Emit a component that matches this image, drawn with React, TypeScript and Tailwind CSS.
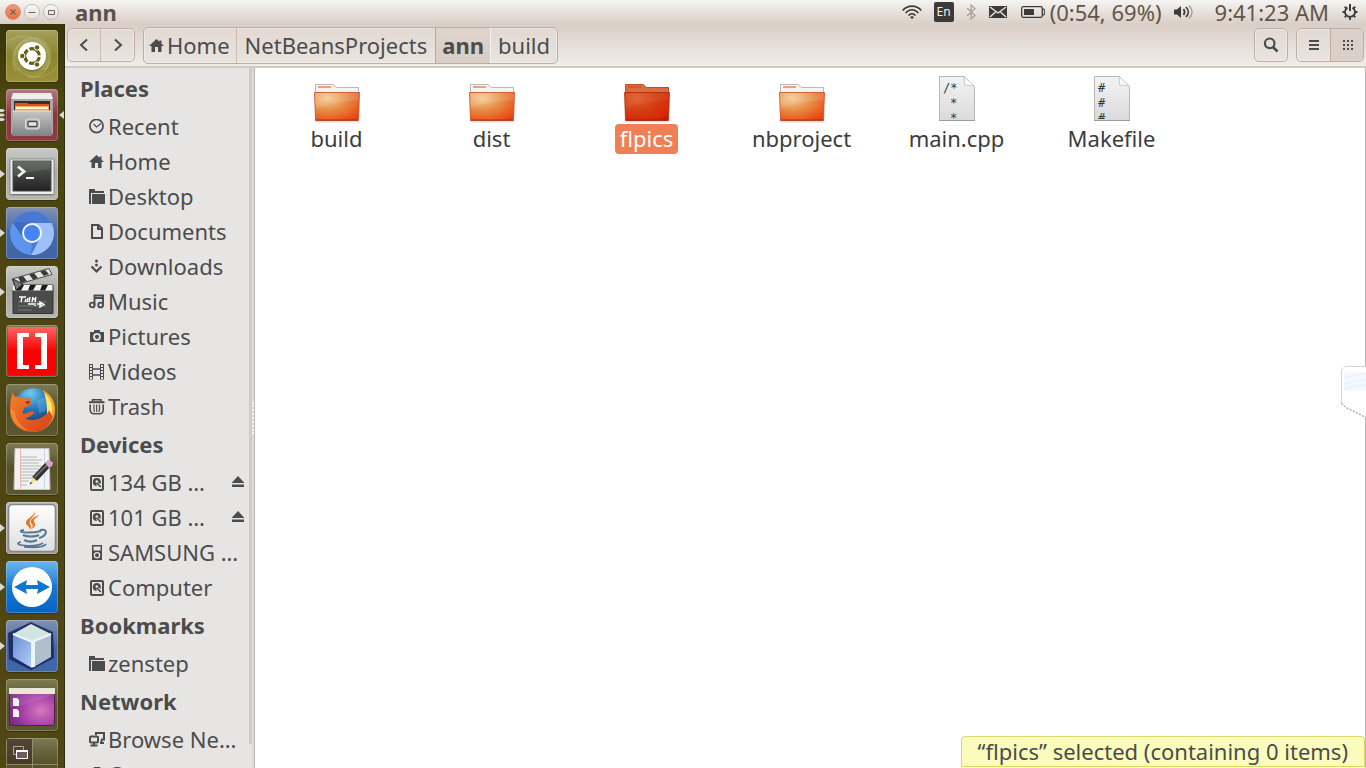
import React, { ReactNode } from "react";

const FONT = "font-['Noto_Sans','Open_Sans',sans-serif]";

/* ---------- Sidebar symbols (16 x 16) ---------- */

type SymbolName =
  | "recent" | "home" | "folder" | "document" | "download" | "music" | "camera"
  | "video" | "trash" | "disk" | "player" | "network" | "server";

const SYMBOLS: Record<SymbolName, ReactNode> = {
  recent: (
    <g fill="none" stroke="currentColor">
      <circle cx="7.500" cy="7" r="6.600" strokeWidth="1.700" />
      <path d="M4.500 5l3 3L12 4.500" strokeWidth="1.200" />
    </g>
  ),
  home: <path fill="currentColor" d="M7.500 1L0 8h2.500v6h3.500V9h3v5h3.500V8H15l-2.500-2.300V2.500h-2v1.200z" />,
  folder: (
    <g fill="currentColor">
      <path d="M0 0h6v2h9v2H2v11H0z" />
      <path d="M3 5h13v10H3z" />
    </g>
  ),
  document: <path fill="none" stroke="currentColor" strokeWidth="2" d="M3 1h6.500L13 4.500V14H3zM9 1v4h4" />,
  download: (
    <g fill="currentColor">
      <circle cx="7.500" cy="2" r="1.500" />
      <circle cx="7.500" cy="6" r="1.500" />
      <path d="M2.500 7.500l5 5 5-5" fill="none" stroke="currentColor" strokeWidth="2.200" />
    </g>
  ),
  music: (
    <g fill="none" stroke="currentColor" strokeWidth="1.900">
      <path d="M5.500 11V1.500H14V11M5.500 4H14" />
      <circle cx="3.200" cy="11" r="2.400" />
      <circle cx="11.600" cy="11" r="2.400" />
    </g>
  ),
  camera: (
    <g>
      <path fill="currentColor" d="M5 1h6v2h4v10H1V3h4z" />
      <circle cx="8" cy="7.800" r="3" fill="none" stroke="#e6e5e4" strokeWidth="1.800" />
    </g>
  ),
  video: (
    <g fill="none" stroke="currentColor">
      <path d="M.5 0v15.500M14.500 0v15.500M3.500 0v15.500M11.500 0v15.500" strokeWidth="1" />
      <path d="M2 0v15.500M13 0v15.500" strokeWidth="2" strokeDasharray="1 2" />
      <path d="M4 5h8M4 11h8" strokeWidth="1.500" />
    </g>
  ),
  trash: (
    <g fill="none" stroke="currentColor" strokeWidth="1.600">
      <path d="M0 3.200h15.500" strokeWidth="2" />
      <path d="M3.500 2.500V.8h8.500v1.700" />
      <path d="M1.200 5.500v5c0 2.500 1.500 4.300 4 4.300h5c2.500 0 4-1.800 4-4.300v-5" />
      <path d="M5.200 5.500c-.6 2.500-.6 5 .3 7.500M7.700 5.500v7.500M10.300 5.500c.6 2.500.6 5-.3 7.500" strokeWidth="1.200" />
    </g>
  ),
  disk: (
    <g>
      <rect x="2" y="1" width="12" height="14" rx="1" fill="none" stroke="currentColor" strokeWidth="2" />
      <circle cx="7.800" cy="7" r="4" fill="currentColor" />
      <circle cx="7.800" cy="6.600" r="1.300" fill="#e6e5e4" />
      <path d="M8.500 8.500l3 4" stroke="#e6e5e4" strokeWidth="3.600" />
      <path d="M8 8l3.700 4" stroke="currentColor" strokeWidth="1.700" />
    </g>
  ),
  player: (
    <g>
      <path fill="currentColor" d="M3 0h10v15H3zM4.500 1.500v4h7v-4z" fillRule="evenodd" />
      <circle cx="8" cy="10.200" r="2.600" fill="none" stroke="#e6e5e4" strokeWidth="1.300" />
    </g>
  ),
  network: (
    <g fill="none" stroke="currentColor" strokeWidth="2">
      <path d="M7 3V1h8v6.500h-3M12.500 8v3M11 11h4" />
      <rect x="1" y="4.500" width="8" height="6" rx="1" />
      <path d="M5 10.500V13M1.500 13.500h7" />
    </g>
  ),
  server: <path fill="currentColor" d="M5 0h6l2 3v11H3V3zM5 6v2h6V6z" fillRule="evenodd" />,
};

function Symbol({ name }: { name: SymbolName }) {
  return (
    <svg viewBox="0 0 16 16" className="size-4 shrink-0" aria-hidden="true">
      {SYMBOLS[name]}
    </svg>
  );
}

/* ---------- Launcher drawings (52 x 52) ---------- */

const ubuntuArt = (
  <g>
    <g fill="none" stroke="#fff" strokeOpacity=".14" strokeWidth="1.200">
      <path d="M9 41C1 20 16 6 31 8c14 3 18 22 8 32" fill="#fff" fillOpacity=".1" />
      <path d="M0 12c18-12 40-4 43 14 2 14-10 24-22 20" fill="#fff" fillOpacity=".06" />
      <path d="M51 36C43 49 24 51 13 40 4 29 9 13 22 10" />
    </g>
    <circle cx="26" cy="27.500" r="14" fill="#403c08" fillOpacity=".4" />
    <circle cx="26" cy="26" r="14" fill="#fff" />
    <circle cx="26" cy="26" r="7.300" fill="none" stroke="#655f12" strokeWidth="3.200" strokeDasharray="13.300 2" strokeDashoffset="-1" />
    <g fill="#655f12" stroke="#fff" strokeWidth="1">
      <circle cx="16.300" cy="26" r="2.700" />
      <circle cx="31" cy="17.500" r="2.700" />
      <circle cx="31" cy="34.500" r="2.700" />
    </g>
  </g>
);

const filesArt = (
  <g>
    <path d="M7 5h38l2 7v33H5V12z" fill="#a7a9a9" />
    <path d="M7 4h38l2 6H5z" fill="#eeeeec" />
    <path d="M8 12h36v13H8z" fill="#303230" />
    <path d="M9 14h12l2 1h20v9H9z" fill="#d9581b" />
    <path d="M9 17h34v8H9z" fill="#f1a55c" />
    <path d="M10 18h32v2H10z" fill="#fff2d8" />
    <path d="M7 22h38l1 25H6z" fill="url(#steel)" />
    <path d="M7 22h38" stroke="#e5e5e5" />
    <rect x="19.500" y="30" width="14" height="10" rx="2" fill="#bbb" stroke="#dedede" />
    <rect x="22" y="32.500" width="9" height="5" rx="1" fill="#e8e8e8" stroke="#494949" strokeWidth="1.300" />
  </g>
);

const terminalArt = (
  <g>
    <rect x="4" y="11" width="44" height="36" rx="1" fill="#eee" stroke="#868886" />
    <path d="M5 46.500h42" stroke="#777" />
    <rect x="7" y="13" width="38" height="30" fill="url(#ink)" stroke="#4a4b4a" />
    <path d="M8 13h36v8Q25 23 8 29z" fill="#fff" fillOpacity=".09" />
    <path d="M12 18.500l6 5-6 5" fill="none" stroke="#f3f3f3" strokeWidth="2.800" />
    <path d="M20 30h8" stroke="#f3f3f3" strokeWidth="2" />
  </g>
);

const chromiumArt = (
  <g>
    <circle cx="26" cy="26" r="22" fill="#5d94ee" />
    <path d="M26 26L7 15A22 22 0 0 1 45.500 16H26z" fill="#4a78cf" />
    <path d="M26 16h19.500A22 22 0 0 1 25 48l9-17z" fill="#9dc0fa" />
    <path d="M6.500 15L17 31l9-15z" fill="#3d6bc4" />
    <path d="M25 48l9-17-8 5z" fill="#477bd5" />
    <circle cx="26" cy="26" r="10" fill="#f5f9ff" />
    <circle cx="26" cy="26" r="8" fill="#4584f3" />
  </g>
);

const clapperArt = (
  <g>
    <path d="M6 13L43 2.500l3 6L9 19z" fill="#e5e5e3" stroke="#4d4e4d" />
    <path d="M12 11.500l5-1.500 4 5-6 2zM23 8.500l5-1.500 4 5-5 1.500zM34 5.500l5-1.500 4 4-5 2z" fill="#3a3b3a" />
    <path d="M7 19h40v28.500H7z" fill="#4b4d4c" stroke="#333" />
    <path d="M6.500 19h40v5.500h-40z" fill="#f4f4f4" />
    <path d="M12 19h6l-3 5.500h-5zM24 19h6l-3 5.500h-5zM36 19h6l-3 5.500h-5z" fill="#1c1c1c" />
    <path d="M7 13l10 5-7 6z" fill="#777" stroke="#292929" />
    <path d="M12 36h28M12 40h28M12 44h14" stroke="#777b78" />
    <path d="M13 31h7m-4 0l-1 5m5-3l-1 3m3-4l-1 4m3-5l-1 5m4-5l-1 5m1-3h2m1-2l-1 5M22 38h6m1-1v3m2-2h5m-2-2v5l4-2.500z" fill="none" stroke="#fff" strokeWidth="1.400" />
  </g>
);

const bracketsArt = (
  <g>
    <path d="M2 2h48v48H2z" fill="#fc0000" />
    <path d="M2 2h48v24H2z" fill="url(#gloss)" />
    <path d="M23 8H11v36h12v-4h-6V12h6zM29 8h12v36H29v-4h6V12h-6z" fill="#fff" />
  </g>
);

const firefoxArt = (
  <g>
    <circle cx="27" cy="24" r="20" fill="url(#globe)" />
    <path d="M14 12c4-5 9-7 14-7l-3 5-8 4zM31 17l7-4 5 5-3 9-7 2z" fill="#7fd4f2" fillOpacity=".3" />
    <path d="M37 6c11 6 14 17 11 27-3 8-10 14-20 15 9-4 14-10 14-19 0-9-1-15-5-23z" fill="#f3a72a" />
    <path d="M38 9c8 6 10 15 7 25l-1-6c-1 3-2 6-4 8 2-9 1-19-2-27z" fill="#fbe667" />
    <path d="M7 8c0 2 1 4 3 5 3-1 7 0 9 2l6-1c-1 2-1 4 0 6-1 2-5 3-7 4 0 2-1 3-2 4 1 2 3 2 5 1 3-2 6-2 8 0-3 1-5 5-10 5 6 4 14 2 20-3 2-1 3-2 4-5l4 7C43 43 36 48 26 48 13 48 4 38 4 26c0-7 1-13 3-18z" fill="url(#fox)" />
    <path d="M5 25c-1 10 6 20 18 22-9-5-13-11-14-19z" fill="#f3a03b" fillOpacity=".6" />
    <path d="M19 18l5-1-2 3z" fill="#7e260d" />
  </g>
);

const editorArt = (
  <g>
    <path d="M9 5.500h34l1 41H8z" fill="#f2f2f2" stroke="#c5c5c5" />
    <path d="M14.500 6v40" stroke="#efb5b3" />
    <path d="M38.500 6v40" stroke="#d0d3ea" />
    <path d="M15 14h16M15 17h21M15 20h18M15 23h21M15 26h18M15 29h18M15 32h12M15 35h12M15 38h8M15 42h6" stroke="#b4b4b4" />
    <path d="M26 34l14-15 5 4-14 15z" fill="#343434" />
    <path d="M28 35l14-14" stroke="#777" strokeWidth="1.500" />
    <path d="M39 20l3-3 3 1 2 2-1 3-3 2z" fill="#dba0cf" />
    <path d="M26 34l5 4-7 3z" fill="#f2e58c" />
    <path d="M24.500 39l2 1-3 1.500z" fill="#333" />
  </g>
);

const javaArt = (
  <g>
    <rect x="2.500" y="2.500" width="47" height="47" rx="4" fill="url(#paper)" stroke="#7f8792" strokeWidth="1.600" />
    <path d="M28 6c5 7-9 10-8 15 0 3 4 3 4 7 3-4-1-5 0-9 1-4 8-6 4-13zM33 13c-8 3-10 6-7 9 1 2 1 3-1 5 7-3 3-6 3-8 0-3 3-3 5-6z" fill="#e9782a" />
    <g fill="none" stroke="#567792" strokeWidth="2">
      <path d="M18 28c-10 2 6 4 17 1M17 33c4 2 12 2 16 0M18 38c4 2 9 2 13 0M34 28c9-2 7 6-1 8" />
      <path d="M15 40c-12 3 14 6 22 1M18 45c12 1 20 0 22-3" strokeWidth="1.700" />
    </g>
  </g>
);

const teamArt = (
  <g>
    <circle cx="26" cy="26" r="20" fill="#fff" />
    <path d="M8 26l13-7-1 5h12l-1-5 13 7-13 7 1-5H20l1 5z" fill="#0d77d4" />
  </g>
);

const cubeArt = (
  <g>
    <path d="M25 2l22 10 1 26-23 12L3 39 2 13z" fill="#17205a" fillOpacity=".82" />
    <path d="M25 4l20 10-19 8L7 14z" fill="#d3e5e0" />
    <path d="M7 14l19 8v26L7 37z" fill="url(#ice)" />
    <path d="M26 22l19-8v23L26 48z" fill="#afbfcb" />
    <path d="M27 22v25" stroke="#e9f6fb" strokeWidth="4" />
    <path d="M7 14l19 8 19-8" fill="none" stroke="#edf6fa" strokeWidth="2" />
  </g>
);

const desktopArt = (
  <g>
    <rect x="3.500" y="9.500" width="45" height="37" rx="2" fill="url(#violet)" stroke="#51204f" />
    <path d="M4 28Q30 24 48 15H4z" fill="#fff" fillOpacity=".1" />
    <path d="M3 9h46v6H3z" fill="#e9e7d6" />
    <path d="M7 19h4l2 2v6H7zM7 30h4l2 2v6H7z" fill="#f6f1f3" />
  </g>
);

const workspaceArt = (
  <g>
    <rect x="1" y="1" width="25" height="26" fill="#45332b" fillOpacity=".75" />
    <path d="M26.500 0v52M0 26.500h52" stroke="#9b987c" strokeOpacity=".8" />
    <path d="M7.500 8.500h10v8h-10z" fill="none" stroke="#aaa69e" />
    <path d="M10.500 12.500h11v8h-11z" fill="#6d5c60" stroke="#fff" />
    <path d="M10 13h12" stroke="#fff" strokeWidth="2" />
  </g>
);

interface LauncherItem { name: string; tile: string; art: ReactNode; running?: boolean; focused?: boolean }

const GLASS = "bg-linear-to-b from-[#7d7a54] via-[#55522a] to-[#5b582f]";

const LAUNCHER: LauncherItem[] = [
  { name: "Dash", tile: "bg-linear-to-b from-[#a5a05c] via-[#8b8428] to-[#999138]", art: ubuntuArt },
  { name: "Files", tile: "bg-linear-to-b from-[#b07b80] via-[#8d343f] to-[#8e3c45]", art: filesArt, focused: true },
  { name: "Terminal", tile: "bg-linear-to-b from-[#c9c9c5] via-[#a9aaa5] to-[#b5b6b0]", art: terminalArt, running: true },
  { name: "Chromium", tile: "bg-linear-to-b from-[#8292b0] via-[#466aa8] to-[#4065a8]", art: chromiumArt, running: true },
  { name: "Video editor", tile: "bg-linear-to-b from-[#c9c9c5] via-[#a8a9a4] to-[#b5b6b0]", art: clapperArt, running: true },
  { name: "Brackets", tile: GLASS, art: bracketsArt },
  { name: "Firefox", tile: GLASS, art: firefoxArt },
  { name: "Text editor", tile: GLASS, art: editorArt },
  { name: "Java", tile: "bg-linear-to-b from-[#bebcb4] to-[#a69d87]", art: javaArt, running: true },
  { name: "TeamViewer", tile: "bg-linear-to-b from-[#6eb5f0] via-[#1479d4] to-[#0763c2]", art: teamArt, running: true },
  { name: "NetBeans", tile: "bg-linear-to-b from-[#8292b0] via-[#4468a6] to-[#4065a8]", art: cubeArt, running: true },
  { name: "Show desktop", tile: GLASS, art: desktopArt },
  { name: "Workspaces", tile: GLASS, art: workspaceArt },
];

function Launcher() {
  return (
    <nav
      aria-label="Launcher"
      className="flex w-[65px] shrink-0 flex-col gap-[7px] overflow-hidden border-r border-[#292b12] bg-linear-to-b from-[#363508] via-[#4b4510] via-10% to-[#514714] pt-[6px]"
    >
      {LAUNCHER.map((item) => (
        <div key={item.name} className="flex shrink-0 items-center">
          <svg viewBox="0 0 6 16" className="h-4 w-[6px] shrink-0" fill="#d9d9d4" aria-hidden="true">
            {item.running && <path d="M0 4l5 4-5 4z" />}
            {item.focused && <path d="M0 2h3l2 1.500L3 5H0zM0 6.500h3L5 8 3 9.500H0zM0 11h3l2 1.500L3 14H0z" />}
          </svg>
          <button
            type="button"
            aria-label={item.name}
            className={`size-[52px] shrink-0 overflow-hidden rounded-[4px] shadow-[inset_0_0_0_1px_rgba(255,255,255,0.22),0_1px_1px_rgba(0,0,0,0.3)] ${item.tile}`}
          >
            <svg viewBox="0 0 52 52" className="size-full" aria-hidden="true">{item.art}</svg>
          </button>
          {item.focused && (
            <svg viewBox="0 0 6 16" className="h-4 w-[6px] shrink-0" aria-hidden="true">
              <path d="M6 4L1 8l5 4z" fill="#d9d9d4" />
            </svg>
          )}
        </div>
      ))}
    </nav>
  );
}

/* ---------- Top panel ---------- */

function WindowButton({ label, tone, children }: { label: string; tone: string; children: ReactNode }) {
  return (
    <button type="button" aria-label={label} className={`grid size-4 place-items-center rounded-full border ${tone}`}>
      <svg viewBox="0 0 14 14" className="size-[14px]" fill="none" stroke="#6b645e" aria-hidden="true">{children}</svg>
    </button>
  );
}

function Panel() {
  return (
    <header className="flex h-6 shrink-0 items-center bg-linear-to-b from-[#f6f4f2] to-[#d9cfc6] pr-2 pl-[5px] text-[#5b524c]">
      <div className="flex gap-[3px]">
        <WindowButton label="Close" tone="border-[#d09078] bg-linear-to-b from-[#f39b76] to-[#ed6c42]">
          <path d="M4.500 4.500l5 5m0-5l-5 5" strokeWidth="1.300" />
        </WindowButton>
        <WindowButton label="Minimize" tone="border-[#c6bdb5] bg-linear-to-b from-[#f9f8f7] to-[#e4dfdb]">
          <path d="M3.500 7.500h7" />
        </WindowButton>
        <WindowButton label="Maximize" tone="border-[#c6bdb5] bg-linear-to-b from-[#f9f8f7] to-[#e4dfdb]">
          <path d="M4.500 5.500h6v4h-6z" />
        </WindowButton>
      </div>
      <h1 className="ml-4 text-[22px] leading-6 font-bold">ann</h1>

      <div className="ml-auto flex items-center text-[22px] leading-6 text-[#5f554c]">
        <svg viewBox="0 0 20 14" className="mr-3 h-[14px] w-5" fill="none" stroke="#3c3b37" strokeWidth="1.600" aria-hidden="true">
          <path d="M.6 5.500C6-.3 14-.3 19.400 5.500M3.600 8C7.500 3.600 12.500 3.600 16.400 8M6.500 10.500c2-2.400 5-2.400 7 0" />
          <path d="M8 12.200c1-1.200 3-1.200 4 0l-2 1.800z" fill="#3c3b37" stroke="none" />
        </svg>
        <span className="mr-3 grid h-5 w-5 place-items-center rounded-[2px] bg-[#3c3b3a] text-[12px] leading-5 text-[#f2efec]">En</span>
        <svg viewBox="0 0 10 16" className="mr-[13px] h-4 w-[10px]" fill="none" stroke="#aaa39c" strokeWidth="1.300" aria-hidden="true">
          <path d="M1 4l8 7.500L5 15V1l4 3.500L1 12" />
        </svg>
        <svg viewBox="0 0 18 12" className="mr-[14px] h-3 w-[18px]" aria-hidden="true">
          <path d="M0 0h18v12H0z" fill="#3c3b3a" />
          <path d="M1 1l8 6 8-6M1 11l5.500-5M17 11l-5.500-5" fill="none" stroke="#f0edea" strokeWidth="1.200" />
        </svg>
        <svg viewBox="0 0 24 12" className="mr-[5px] h-3 w-6" aria-hidden="true">
          <rect x=".7" y=".7" width="20.600" height="10.600" rx="1.500" fill="none" stroke="#3c3b3a" strokeWidth="1.300" />
          <path d="M22 3h1.300v6H22" fill="none" stroke="#3c3b3a" />
          <path d="M3 3h10v6H3z" fill="#3c3b3a" />
        </svg>
        <span>(0:54, 69%)</span>
        <svg viewBox="0 0 20 16" className="mr-[21px] ml-3 h-4 w-5" fill="none" strokeWidth="1.700" aria-hidden="true">
          <path d="M0 5.500h3L7 2v12l-4-3.500H0z" fill="#3c3b3a" />
          <path d="M9.500 5c1.500 2 1.500 4 0 6M12 3c3 3 3 7 0 10" stroke="#3c3b3a" />
          <path d="M15 1.500c4 4 4 9 0 13" stroke="#aaa39c" />
        </svg>
        <time>9:41:23 AM</time>
        <svg viewBox="0 0 16 16" className="ml-[13px] size-4" fill="none" stroke="#3c3b3a" aria-hidden="true">
          <path d="M5.500 3.600a5 5 0 1 0 5 0" strokeWidth="1.800" />
          <path d="M8 0v7" strokeWidth="2" />
          <path d="M.5 8H3M13 8h2.500M2.700 2.700l1.600 1.600M13.300 2.700l-1.600 1.600M2.700 13.300l1.600-1.600M13.300 13.300l-1.600-1.600M8 13v3" strokeWidth="1.800" />
        </svg>
      </div>
    </header>
  );
}

/* ---------- Toolbar ---------- */

const BEVEL = "rounded-[5px] border border-[#bcaea2] bg-linear-to-b from-[#e2d9d2] to-[#e9e4df] shadow-[inset_0_0_0_1px_rgba(255,255,255,0.35)]";

function Toolbar() {
  return (
    <div className="flex h-[44px] shrink-0 items-start border-b-2 border-[#cfcac4] bg-linear-to-b from-[#d9cec5] to-[#f1ede9] pt-[3px] pr-[2px] pl-[2px] text-[#4c4c4c]">
      <div className={`mt-[1px] flex h-[34px] ${BEVEL}`}>
        <button type="button" aria-label="Back" className="grid w-[33px] place-items-center border-r border-[#c9bdb3]">
          <svg viewBox="0 0 16 16" className="size-4" fill="none" stroke="currentColor" strokeWidth="2" aria-hidden="true"><path d="M11 2.500L5 8l6 5.500" /></svg>
        </button>
        <button type="button" aria-label="Forward" className="grid w-[33px] place-items-center">
          <svg viewBox="0 0 16 16" className="size-4" fill="none" stroke="currentColor" strokeWidth="2" aria-hidden="true"><path d="M5 2.500L11 8l-6 5.500" /></svg>
        </button>
      </div>

      <nav aria-label="Path" className={`ml-2 flex h-[37px] overflow-hidden text-[22px] leading-[35px] ${BEVEL}`}>
        <button type="button" className="flex items-center gap-[2px] border-r border-[#c9bdb3] pr-[6px] pl-[5px]">
          <Symbol name="home" />
          Home
        </button>
        <button type="button" className="px-2">NetBeansProjects</button>
        <button type="button" aria-current="true" className="border-l border-[#b9aa9f] bg-linear-to-b from-[#dfd5cd] to-[#d8cdc4] px-[6px] font-bold">ann</button>
        <button type="button" className="border-l border-[#f5f2f0] px-[7px]">build</button>
      </nav>

      <button type="button" aria-label="Search" className={`mt-[1px] ml-auto grid h-[34px] w-[34px] place-items-center ${BEVEL}`}>
        <svg viewBox="0 0 16 16" className="size-4" fill="none" stroke="currentColor" aria-hidden="true">
          <circle cx="6.700" cy="6.300" r="4.800" strokeWidth="2.200" />
          <path d="M10 10l4.500 4.500" strokeWidth="2.600" />
        </svg>
      </button>
      <div className={`mt-[1px] ml-2 flex h-[34px] overflow-hidden ${BEVEL}`}>
        <button type="button" aria-label="List view" className="grid w-[33px] place-items-center">
          <svg viewBox="0 0 16 16" className="size-4" stroke="currentColor" strokeWidth="2" aria-hidden="true"><path d="M3 4h10M3 8h10M3 12h10" /></svg>
        </button>
        <button type="button" aria-label="Icon view" aria-pressed="true" className="grid w-[33px] place-items-center border-l border-[#bcaea2] bg-[#dbd0c7]">
          <svg viewBox="0 0 16 16" className="size-4" stroke="currentColor" strokeWidth="2" strokeDasharray="2 2" aria-hidden="true"><path d="M4 4h10M4 8h10M4 12h10" /></svg>
        </button>
      </div>
    </div>
  );
}

/* ---------- Sidebar ---------- */

interface Place { label: string; icon: SymbolName; eject?: boolean }

const SECTIONS: { title: string; places: Place[] }[] = [
  {
    title: "Places",
    places: [
      { label: "Recent", icon: "recent" },
      { label: "Home", icon: "home" },
      { label: "Desktop", icon: "folder" },
      { label: "Documents", icon: "document" },
      { label: "Downloads", icon: "download" },
      { label: "Music", icon: "music" },
      { label: "Pictures", icon: "camera" },
      { label: "Videos", icon: "video" },
      { label: "Trash", icon: "trash" },
    ],
  },
  {
    title: "Devices",
    places: [
      { label: "134 GB …", icon: "disk", eject: true },
      { label: "101 GB …", icon: "disk", eject: true },
      { label: "SAMSUNG …", icon: "player" },
      { label: "Computer", icon: "disk" },
    ],
  },
  { title: "Bookmarks", places: [{ label: "zenstep", icon: "folder" }] },
  {
    title: "Network",
    places: [
      { label: "Browse Ne…", icon: "network" },
      { label: "Connect to…", icon: "server" },
    ],
  },
];

function Sidebar() {
  return (
    <aside className="flex w-[190px] shrink-0 overflow-hidden border-r border-[#b9b6b2] bg-[#e6e5e4] text-[22px] text-[#4c4c4c]">
      <div className="min-w-0 flex-1">
        {SECTIONS.map((section) => (
          <section key={section.title}>
            <h2 className="pl-[15px] leading-[41px] font-bold">{section.title}</h2>
            <ul>
              {section.places.map((place) => (
                <li key={place.label} className="flex h-[35px] items-center pr-[3px] pl-6">
                  <a href="#" className="flex items-center gap-[3px] leading-[35px] whitespace-nowrap">
                    <Symbol name={place.icon} />
                    {place.label}
                  </a>
                  {place.eject && (
                    <button type="button" aria-label={`Eject ${place.label}`} className="ml-auto">
                      <svg viewBox="0 0 16 16" className="size-4" fill="currentColor" aria-hidden="true">
                        <path d="M8 1l6.500 7h-13zM2 9.500h12v2.500H2z" />
                      </svg>
                    </button>
                  )}
                </li>
              ))}
            </ul>
          </section>
        ))}
      </div>
      <div className="mb-6 w-[3px] bg-[#cfcdca]" />
      <div className="grid w-[2px] place-items-center bg-[#dddbd9]">
        <div className="h-8 w-[2px] border-l-2 border-dotted border-[#f5f5f5]" />
      </div>
    </aside>
  );
}

/* ---------- File area ---------- */

function FolderArt({ selected }: { selected?: boolean }) {
  return (
    <svg viewBox="0 0 48 48" className="size-12" aria-hidden="true">
      <path d="M1.500 46.500h45" stroke="#000" strokeOpacity=".12" strokeWidth="2" />
      <path d="M2.500 20V9.500h17.500l3.500 3h22V20z" fill={selected ? "#dc6b42" : "#f4f4f3"} stroke={selected ? "#b5532f" : "#b9b9b8"} />
      <path d="M5 12h13" stroke={selected ? "#ea4e20" : "#f2a173"} strokeWidth="2" />
      <path d="M1.500 17.500h45l-1 28h-43z" fill={selected ? "url(#folderHot)" : "url(#folder)"} stroke={selected ? "#a82708" : "#c3461b"} strokeOpacity=".75" />
      <path d="M2 18h44v7Q24 26 2.500 33z" fill="#fff" fillOpacity={selected ? ".05" : ".12"} />
      <path d="M3 45h42" stroke="#8d2004" strokeOpacity=".6" />
    </svg>
  );
}

function PageArt({ lines }: { lines: string[] }) {
  return (
    <svg viewBox="0 0 48 48" className="size-12" aria-hidden="true">
      <path d="M6.500 1.500h25l10 10v34h-35z" fill="url(#page)" stroke="#b7b7b7" />
      <path d="M6 45.500h36" stroke="#9d9d9d" />
      <path d="M31 1.500l.5 8.500 10 1z" fill="#fafafa" stroke="#c9c9c9" />
      <svg x="7" y="2" width="34" height="42">
        <g fill="#2f3c40" fontFamily="'DejaVu Sans Mono', monospace" fontSize="12">
          {lines.map((line, i) => (
            <text key={i} x={3 + 7 * (line.length - line.trimStart().length)} y={15 + i * 15}>
              {line.trimStart()}
            </text>
          ))}
        </g>
      </svg>
    </svg>
  );
}

const FILES: { name: string; selected?: boolean; lines?: string[] }[] = [
  { name: "build" },
  { name: "dist" },
  { name: "flpics", selected: true },
  { name: "nbproject" },
  { name: "main.cpp", lines: ["/*", " *", " *"] },
  { name: "Makefile", lines: ["#", "#", "#"] },
];

function FileArea() {
  return (
    <main className="relative min-w-0 flex-1 border-r border-[#b9b6b2] bg-white">
      <ul className="flex flex-wrap pt-[7px] pl-1">
        {FILES.map((file) => (
          <li key={file.name} className="w-[155px]">
            <button type="button" aria-pressed={!!file.selected} className="flex w-full flex-col items-center">
              {file.lines ? <PageArt lines={file.lines} /> : <FolderArt selected={file.selected} />}
              <span
                className={`mt-[1px] rounded-[4px] px-[5px] pb-[2px] text-[22px] leading-[28px] ${
                  file.selected ? "bg-[#f07f55] text-white" : "text-[#3c3c3c]"
                }`}
              >
                {file.name}
              </span>
            </button>
          </li>
        ))}
      </ul>

      <svg viewBox="0 0 25 52" className="absolute top-[298px] -right-px h-[52px] w-[25px]" aria-hidden="true">
        <path d="M25 .5H4L.5 4v34L4 42l21 9.500z" fill="#fff" />
        <path d="M25 .5H4L.5 4v34" fill="none" stroke="#cdd5e2" />
        <path d="M.5 37L4 41l21 10.500" fill="none" stroke="#777b83" strokeDasharray="2 1.500" />
        <path d="M3 6h22v19H3z" fill="#f5f9fe" />
        <path d="M4 12q10-4 21-4M4 18q10-4 21-4M4 23q10-4 21-4" fill="none" stroke="#eaf2fc" strokeWidth="2" />
      </svg>

      <p
        role="status"
        className="absolute right-0 bottom-px rounded-t-[4px] border border-[#d9d96a] bg-[#fbfbbc] px-4 text-[22px] leading-[29px] text-[#4c4c4c]"
      >
        “flpics” selected (containing 0 items)
      </p>
    </main>
  );
}

/* Gradients shared by the drawings. */
function Gradients() {
  return (
    <svg className="absolute size-0" aria-hidden="true">
      <defs>
        <linearGradient id="steel" x2="0" y2="1"><stop stopColor="#c4c5c5" /><stop offset="1" stopColor="#818484" /></linearGradient>
        <linearGradient id="ink" x2="0" y2="1"><stop stopColor="#5a5c5a" /><stop offset="1" stopColor="#222322" /></linearGradient>
        <linearGradient id="gloss" x2="0" y2="1"><stop stopColor="#fff" stopOpacity=".4" /><stop offset="1" stopColor="#fff" stopOpacity="0" /></linearGradient>
        <linearGradient id="paper" x2="0" y2="1"><stop stopColor="#fff" /><stop offset="1" stopColor="#dedede" /></linearGradient>
        <linearGradient id="page" x2="0" y2="1"><stop stopColor="#f3f3f3" /><stop offset="1" stopColor="#dadada" /></linearGradient>
        <linearGradient id="ice" x2="1" y2="1"><stop stopColor="#688ecd" /><stop offset="1" stopColor="#b4cfff" /></linearGradient>
        <linearGradient id="fox" x2="1" y2="1"><stop stopColor="#f0842c" /><stop offset=".5" stopColor="#e95e21" /><stop offset="1" stopColor="#d6401c" /></linearGradient>
        <radialGradient id="globe" cx=".45" cy=".15" r=".8"><stop stopColor="#6cc8ee" /><stop offset=".5" stopColor="#2673b4" /><stop offset="1" stopColor="#143c78" /></radialGradient>
        <radialGradient id="violet" cx=".7" cy=".6" r=".8"><stop stopColor="#d479bd" /><stop offset=".5" stopColor="#a942a8" /><stop offset="1" stopColor="#6b2876" /></radialGradient>
        <radialGradient id="folder" cx=".28" cy=".2" r=".95"><stop stopColor="#f4cb94" /><stop offset=".5" stopColor="#e58840" /><stop offset=".85" stopColor="#ec561c" /><stop offset="1" stopColor="#d94816" /></radialGradient>
        <radialGradient id="folderHot" cx=".28" cy=".2" r=".95"><stop stopColor="#e25d2c" /><stop offset=".5" stopColor="#d13d13" /><stop offset=".85" stopColor="#dc2804" /><stop offset="1" stopColor="#bf2103" /></radialGradient>
      </defs>
    </svg>
  );
}

export default function App() {
  return (
    <div className={`flex h-screen flex-col overflow-hidden ${FONT}`}>
      <Gradients />
      <Panel />
      <div className="flex min-h-0 flex-1">
        <Launcher />
        <div className="flex min-w-0 flex-1 flex-col">
          <Toolbar />
          <div className="flex min-h-0 flex-1">
            <Sidebar />
            <FileArea />
          </div>
        </div>
      </div>
    </div>
  );
}
